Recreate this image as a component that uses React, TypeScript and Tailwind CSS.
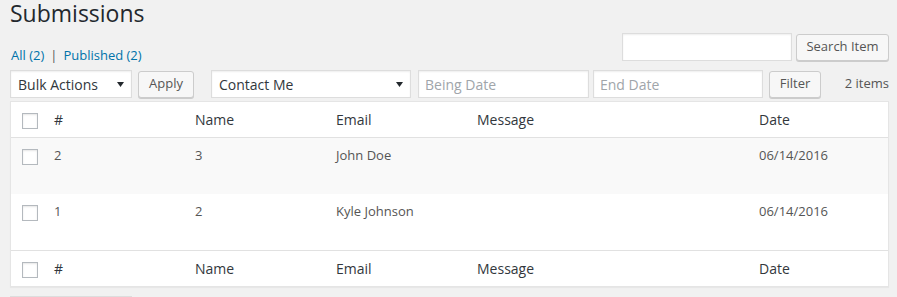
import type { ReactNode } from "react";

const font = { fontFamily: '"Open Sans", "Liberation Sans", sans-serif' };

const rows = [
  { id: "2", name: "3", email: "John Doe", message: "", date: "06/14/2016", bg: "bg-[#f9f9f9]" },
  { id: "1", name: "2", email: "Kyle Johnson", message: "", date: "06/14/2016", bg: "bg-white" },
];

const cols = "grid grid-cols-[33px_141px_141px_141px_282px_1fr]";

function Checkbox() {
  return (
    <span className="block w-4 h-4 bg-white border border-[#b4b9be] shadow-[inset_0_1px_2px_rgba(0,0,0,0.1)]" />
  );
}

function Arrow() {
  return (
    <svg width="7" height="5" viewBox="0 0 7 5" className="shrink-0">
      <path d="M0 0h7L3.5 5z" fill="#23282d" />
    </svg>
  );
}

function Select({ label, w }: { label?: string; w: string }) {
  return (
    <div
      className={`${w} h-[28px] flex items-center justify-between pl-[7px] pr-[7px] bg-white border border-[#ddd] shadow-[inset_0_1px_2px_rgba(0,0,0,0.07)] text-[14px] text-[#32373c]`}
    >
      <span>{label}</span>
      {label && <Arrow />}
    </div>
  );
}

function Input({ placeholder, w }: { placeholder?: string; w: string }) {
  return (
    <div
      className={`${w} h-[28px] flex items-center px-[6px] bg-white border border-[#ddd] shadow-[inset_0_1px_2px_rgba(0,0,0,0.07)] text-[14px] text-[#a0a5aa]`}
    >
      {placeholder}
    </div>
  );
}

function Button({ children, w }: { children?: ReactNode; w: string }) {
  return (
    <div
      className={`${w} h-[27px] flex items-center justify-center rounded-[3px] bg-[#f7f7f7] border border-[#ccc] shadow-[0_1px_0_#ccc] text-[13px] text-[#555] pb-[1px]`}
    >
      {children}
    </div>
  );
}

function HeadRow({ top }: { top?: boolean }) {
  return (
    <div className={`${cols} h-[36px] text-[14px] text-[#32373c] ${top ? "border-b" : "border-t"} border-[#e1e1e1]`}>
      <div className="pl-[11px] pt-[11px]">
        <Checkbox />
      </div>
      <div className="px-[10px] pt-[8px] leading-[20px]">#</div>
      <div className="px-[10px] pt-[8px] leading-[20px]">Name</div>
      <div className="px-[10px] pt-[8px] leading-[20px]">Email</div>
      <div className="px-[10px] pt-[8px] leading-[20px]">Message</div>
      <div className="px-[10px] pt-[8px] leading-[20px]">Date</div>
    </div>
  );
}

export default function App() {
  return (
    <div className="h-[297px] bg-[#f1f1f1] pl-[10px] pr-[8px] overflow-hidden" style={font}>
      <h1 className="text-[23px] leading-[26px] font-normal text-[#23282d]">Submissions</h1>

      <div className="flex items-start justify-between mt-[7px]">
        <div className="text-[13px] leading-[18px] mt-[13px] ml-[1px] text-[#555]">
          <span className="text-[#0073aa]">All (2)</span>
          <span className="mx-[6px] text-[#555]">|</span>
          <span className="text-[#0073aa]">Published (2)</span>
        </div>
        <div className="flex items-center gap-[4px]">
          <Input w="w-[170px]" />
          <Button w="w-[93px]">Search Item</Button>
        </div>
      </div>

      <div className="flex items-center mt-[6px] h-[28px]">
        <Select label="Bulk Actions" w="w-[122px]" />
        <div className="ml-[6px]">
          <Button w="w-[56px]">Apply</Button>
        </div>
        <div className="ml-[17px]">
          <Select label="Contact Me" w="w-[200px]" />
        </div>
        <div className="ml-[7px]">
          <Input placeholder="Being Date" w="w-[171px]" />
        </div>
        <div className="ml-[4px]">
          <Input placeholder="End Date" w="w-[170px]" />
        </div>
        <div className="ml-[6px]">
          <Button w="w-[52px]">Filter</Button>
        </div>
        <div className="ml-auto text-[13px] text-[#555]">2 items</div>
      </div>

      <div className="mt-[3px] bg-white border border-[#e5e5e5] shadow-[0_1px_1px_rgba(0,0,0,0.04)]">
        <HeadRow top />
        {rows.map((r) => (
          <div key={r.id} className={`${cols} h-[56px] ${r.bg} text-[13px] leading-[18px] text-[#555]`}>
            <div className="pl-[11px] pt-[11px]">
              <Checkbox />
            </div>
            <div className="px-[10px] pt-[8px]">{r.id}</div>
            <div className="px-[10px] pt-[8px]">{r.name}</div>
            <div className="px-[10px] pt-[8px]">{r.email}</div>
            <div className="px-[10px] pt-[8px]">{r.message}</div>
            <div className="px-[10px] pt-[8px]">{r.date}</div>
          </div>
        ))}
        <HeadRow />
      </div>

      {/* bottom tablenav, only its top edge is in view */}
      <div className="flex items-center mt-[9px] h-[28px]">
        <Select w="w-[122px]" />
        <div className="ml-[7px]">
          <Button w="w-[55px]" />
        </div>
      </div>
    </div>
  );
}
